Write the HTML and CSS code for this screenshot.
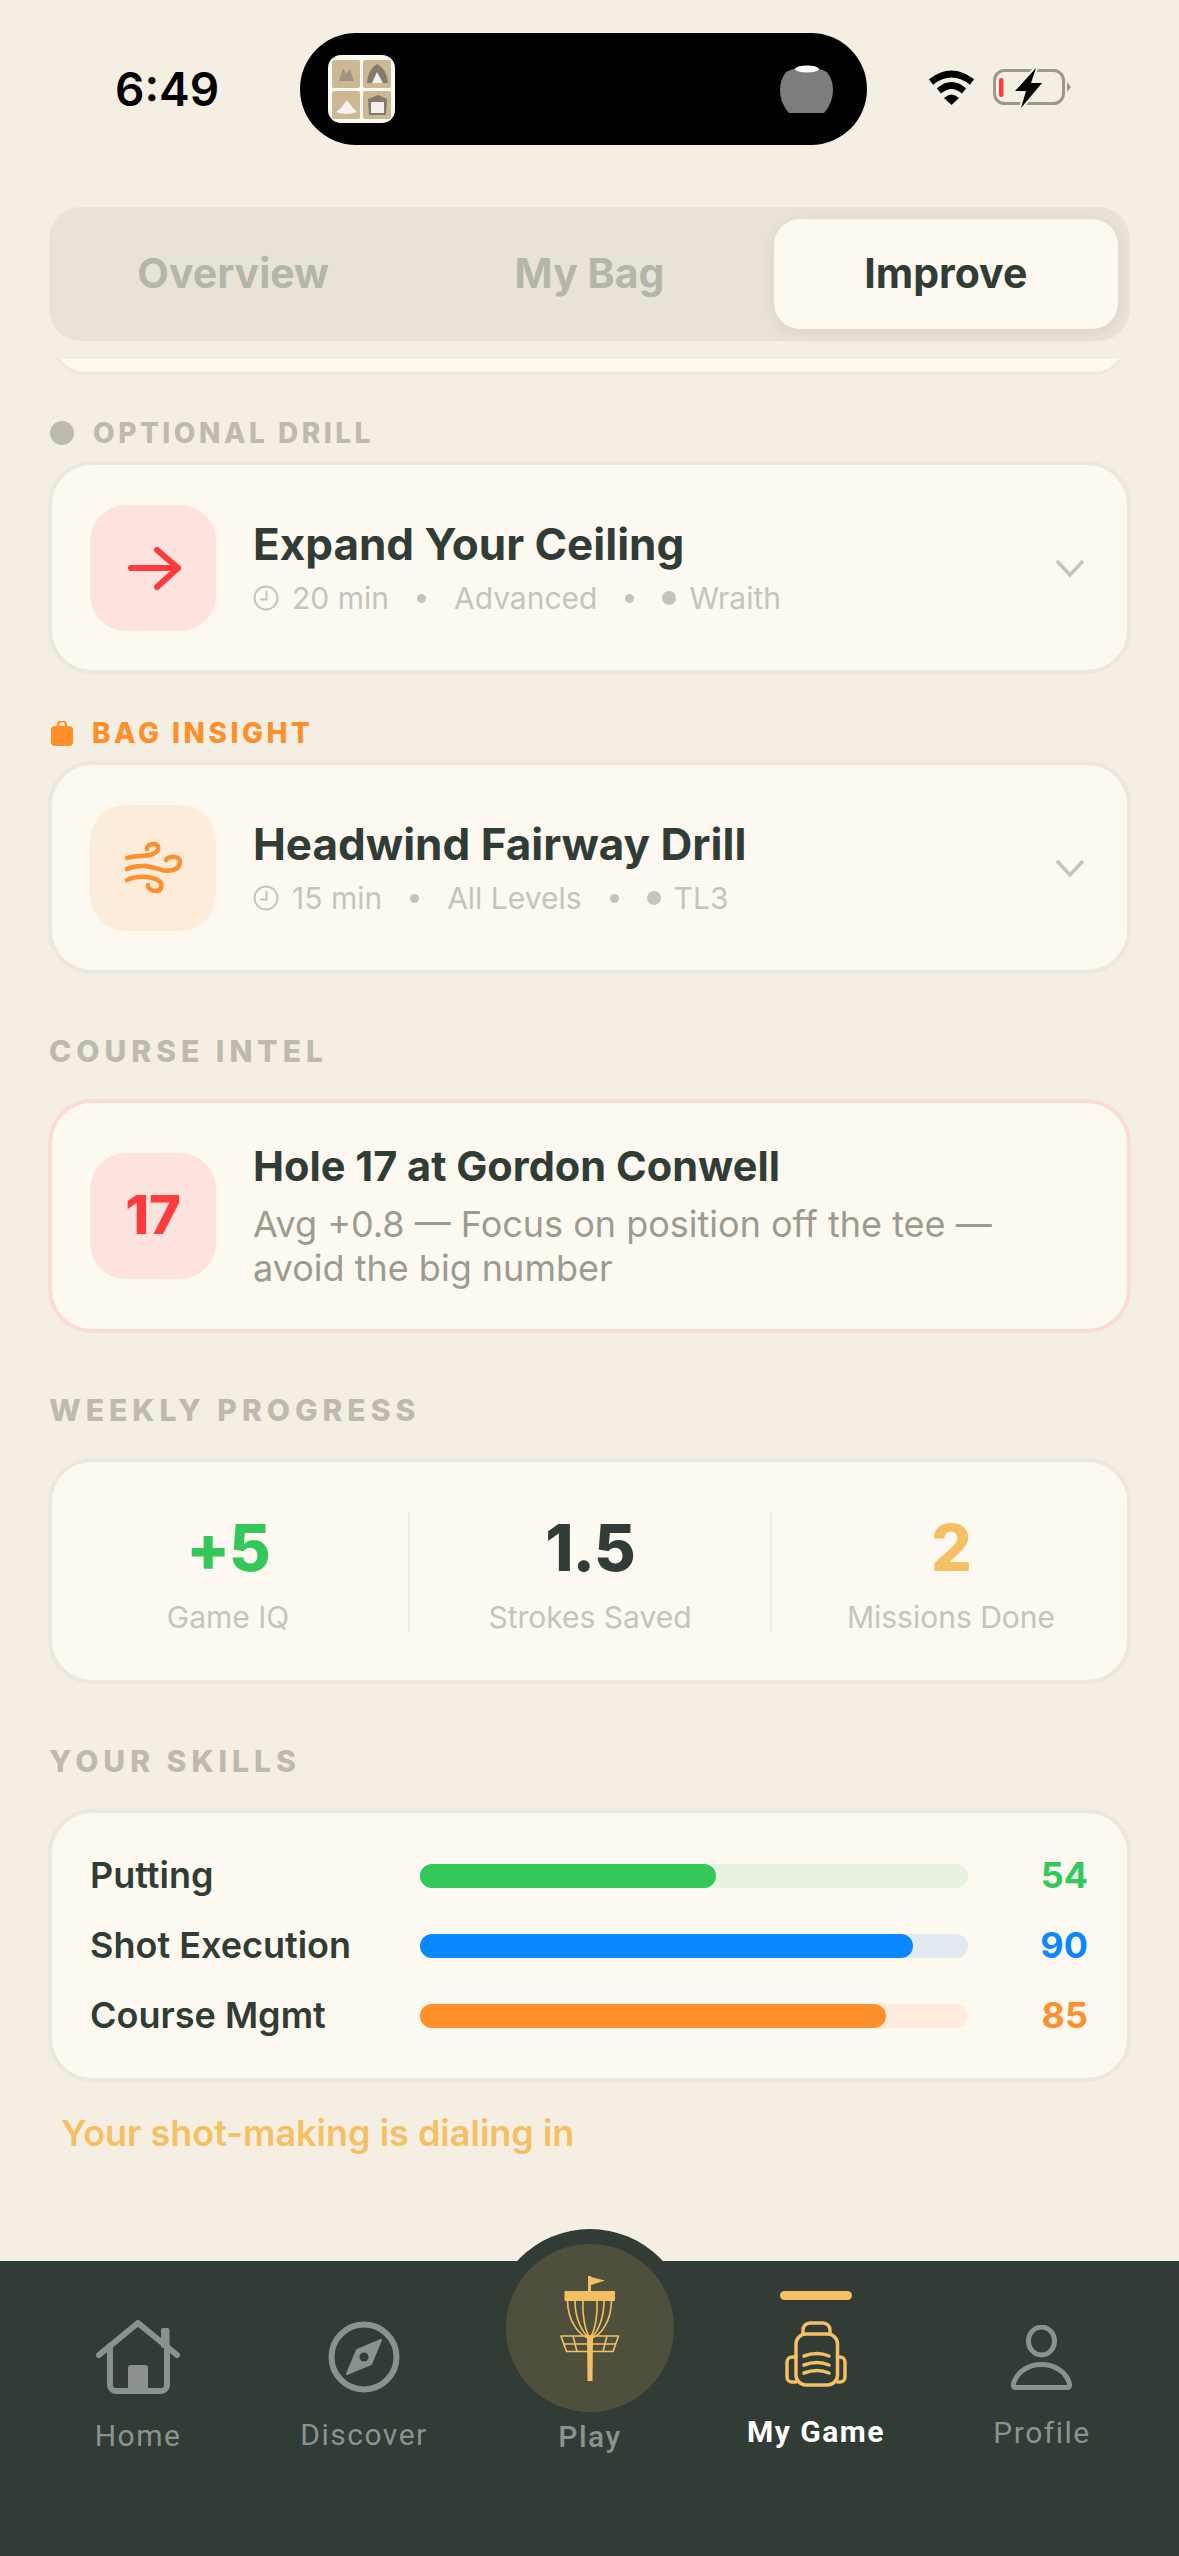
FILE: index.html
```html
<!DOCTYPE html>
<html>
<head>
<meta charset="utf-8">
<title>My Game</title>
<link rel="stylesheet" href="styles.css">
</head>
<body>
<div class="page">

	<div class="status">
		<span class="time">6:49</span>
		<div class="island">
			<svg class="app-icon" viewBox="0 0 67 68">
				<rect width="67" height="68" rx="13" fill="#fbf9f4"/>
				<rect x="4" y="5" width="28" height="28" rx="2" fill="#cdb894"/>
				<rect x="35" y="5" width="28" height="28" rx="2" fill="#cdb894"/>
				<rect x="4" y="36" width="28" height="28" rx="2" fill="#cdb894"/>
				<rect x="35" y="36" width="28" height="28" rx="2" fill="#cdb894"/>
				<path d="M11 26 L15 13 L18 19 L22 14 L26 26 Z" fill="#8f8674" opacity=".7"/>
				<path d="M39 28 Q40 14 49 9 Q59 14 60 28 Z" fill="#6f6a5f" opacity=".8"/>
				<path d="M44 28 L49 17 L55 28 Z" fill="#f3f1ea"/>
				<path d="M8 57 Q18 61 29 57 L25 53 L19 45 L13 53 Z" fill="#f6f4ee"/>
				<path d="M40 44 L50 40 L59 44 L58 60 L41 60 Z" fill="#6f6a5f" opacity=".8"/>
				<rect x="43" y="47" width="13" height="11" fill="#f3f1ea"/>
			</svg>
			<svg class="pod" viewBox="0 0 53 48">
				<path d="M6 7 Q26 -3 47 7 Q53 15 53 25 Q53 38 44 48 H9 Q0 38 0 25 Q0 15 6 7 Z" fill="#7d7d7d"/>
				<ellipse cx="27" cy="4" rx="12" ry="3.5" fill="#fff"/>
			</svg>
		</div>
		<svg class="wifi" viewBox="0 0 47 35">
			<path d="M3 12 Q23.5 -4 44 12" fill="none" stroke="#000" stroke-width="7"/>
			<path d="M11 21 Q23.5 10 36 21" fill="none" stroke="#000" stroke-width="6.5"/>
			<path d="M16 28 Q23.5 21 31 28 L23.5 35 Z" fill="#000"/>
		</svg>
		<svg class="battery" viewBox="0 0 80 40">
			<rect x="1.5" y="2.5" width="69" height="33" rx="10" fill="none" stroke="#9b9890" stroke-width="3"/>
			<path d="M74 14 L78 19 L74 24 Z" fill="#9b9890"/>
			<rect x="6" y="10" width="4.5" height="19" rx="2" fill="#ff3b3b"/>
			<path d="M43 0 L22 23 H33 L28 40 L49 15 H38 Z" fill="#000" stroke="#f5eee3" stroke-width="4" paint-order="stroke"/>
		</svg>
	</div>

	<div class="main">
		<div class="tabs">
			<div class="tab">Overview</div>
			<div class="tab">My Bag</div>
			<div class="tab tab-on">Improve</div>
		</div>

		<div class="stub"><div class="stub-card"></div></div>

		<div class="label label-first"><span class="dot"></span>OPTIONAL DRILL</div>
		<div class="card drill">
			<div class="tile tile-red">
				<svg class="tile-svg" viewBox="0 0 126 126">
					<path d="M41 63 H88 M67 45 L88 63 L67 82" fill="none" stroke="#ff3b3b" stroke-width="6" stroke-linecap="round" stroke-linejoin="round"/>
				</svg>
			</div>
			<div class="drill-text">
				<div class="title">Expand Your Ceiling</div>
				<div class="meta">
					<span class="meta-item">
						<svg class="clock" viewBox="0 0 26 26"><circle cx="13" cy="13" r="11.5" fill="none" stroke="#c6c4ba" stroke-width="2"/><path d="M13.5 6 V14.5 H7" fill="none" stroke="#c6c4ba" stroke-width="2"/></svg>
						20 min
					</span>
					<span class="sep"></span>
					<span>Advanced</span>
					<span class="sep"></span>
					<span class="meta-item"><span class="disc"></span>Wraith</span>
				</div>
			</div>
			<svg class="chevron" viewBox="0 0 30 18"><path d="M2 2 L15 16 L28 2" fill="none" stroke="#c6c4ba" stroke-width="3.5"/></svg>
		</div>

		<div class="label label-orange label-first2">
			<svg class="bag-mini" viewBox="0 0 22 25"><path d="M7 6 V4 a4 4 0 0 1 8 0 V6" fill="none" stroke="#ff8f2b" stroke-width="2.5"/><rect y="5" width="22" height="20" rx="4" fill="#ff8f2b"/></svg>
			BAG INSIGHT
		</div>
		<div class="card drill">
			<div class="tile tile-orange">
				<svg class="tile-svg" viewBox="0 0 126 126">
					<g fill="none" stroke="#ff8f2b" stroke-width="4.5" stroke-linecap="round">
						<path d="M37 53 C45 50 57 52 63 49 C71 45 69 39 63 39 C60 39 57 41 57 44"/>
						<path d="M37 64 C50 58 62 62 72 65 C82 67 90 64 90 57 C90 51 80 50 76 55"/>
						<path d="M37 75 C47 70 62 71 69 76 C73 79 72 86 66 86 C62 86 58 84 58 80"/>
					</g>
				</svg>
			</div>
			<div class="drill-text">
				<div class="title">Headwind Fairway Drill</div>
				<div class="meta">
					<span class="meta-item">
						<svg class="clock" viewBox="0 0 26 26"><circle cx="13" cy="13" r="11.5" fill="none" stroke="#c6c4ba" stroke-width="2"/><path d="M13.5 6 V14.5 H7" fill="none" stroke="#c6c4ba" stroke-width="2"/></svg>
						15 min
					</span>
					<span class="sep"></span>
					<span>All Levels</span>
					<span class="sep"></span>
					<span class="meta-item"><span class="disc"></span>TL3</span>
				</div>
			</div>
			<svg class="chevron" viewBox="0 0 30 18"><path d="M2 2 L15 16 L28 2" fill="none" stroke="#c6c4ba" stroke-width="3.5"/></svg>
		</div>

		<div class="label label-plain">COURSE INTEL</div>
		<div class="card intel">
			<div class="tile tile-red tile-num">17</div>
			<div class="intel-text">
				<div class="intel-title">Hole 17 at Gordon Conwell</div>
				<div class="intel-desc">Avg +0.8 — Focus on position off the tee — avoid the big number</div>
			</div>
		</div>

		<div class="label label-plain">WEEKLY PROGRESS</div>
		<div class="card stats">
			<div class="stat stat-a">
				<div class="stat-val c-green">+5</div>
				<div class="stat-name">Game IQ</div>
			</div>
			<div class="stat stat-line">
				<div class="stat-val">1.5</div>
				<div class="stat-name">Strokes Saved</div>
			</div>
			<div class="stat stat-line stat-c">
				<div class="stat-val c-amber">2</div>
				<div class="stat-name">Missions Done</div>
			</div>
		</div>

		<div class="label label-plain">YOUR SKILLS</div>
		<div class="card skills">
			<div class="skill">
				<span class="skill-name">Putting</span>
				<div class="track track-green"><div class="fill fill-green" style="width:54%"></div></div>
				<span class="skill-val c-green">54</span>
			</div>
			<div class="skill">
				<span class="skill-name">Shot Execution</span>
				<div class="track track-blue"><div class="fill fill-blue" style="width:90%"></div></div>
				<span class="skill-val c-blue">90</span>
			</div>
			<div class="skill">
				<span class="skill-name">Course Mgmt</span>
				<div class="track track-orange"><div class="fill fill-orange" style="width:85%"></div></div>
				<span class="skill-val c-orange">85</span>
			</div>
		</div>
		<div class="caption">Your shot-making is dialing in</div>
	</div>

	<div class="nav">
		<div class="nav-item nav-home">
			<svg class="ico-home" viewBox="0 0 84 74">
				<g fill="none" stroke="#8b928e" stroke-width="6" stroke-linecap="round" stroke-linejoin="round">
					<path d="M3 35 L42 3 L81 35"/>
					<path d="M14 26 V65 a6 6 0 0 0 6 6 H65 a6 6 0 0 0 6 -6 V26"/>
				</g>
				<rect x="65" y="8" width="8.5" height="20" rx="2" fill="#8b928e"/>
				<rect x="32" y="45" width="20" height="27" rx="3" fill="#8b928e"/>
			</svg>
			<span class="nav-txt">Home</span>
		</div>
		<div class="nav-item nav-disc">
			<svg class="ico-compass" viewBox="0 0 72 72">
				<circle cx="36" cy="36" r="32.5" fill="none" stroke="#8b928e" stroke-width="6"/>
				<path d="M53 19 L43 43 L19 53 L29 29 Z" fill="#8b928e" stroke="#8b928e" stroke-width="2" stroke-linejoin="round"/>
				<circle cx="36" cy="36" r="4.5" fill="#303c35"/>
			</svg>
			<span class="nav-txt">Discover</span>
		</div>
		<div class="nav-item nav-play">
			<div class="play-btn">
				<svg class="ico-basket" viewBox="26 24 168 168">
					<g fill="#f5bf63">
						<rect x="108" y="56" width="3" height="16"/>
						<path d="M111 57 L125 60.5 L111 65 Z"/>
						<rect x="84.5" y="71" width="50.5" height="10" rx="1"/>
						<path d="M107 118 H113 L112.5 161 H107.5 Z"/>
					</g>
					<g fill="none" stroke="#f5bf63" stroke-width="1.6">
						<path d="M87.5 81 C88 100 98 116 110 118.5 C122 116 131 100 131.5 81"/>
						<path d="M95 81 C95 98 102 113 110 118.5 C118 113 124 98 124 81"/>
						<path d="M103 81 C102 95 105 110 110 118.5 C115 110 118 95 117 81"/>
						<path d="M81 116 H138.5 L133 131.5 H86.5 Z" stroke-linejoin="round"/>
						<path d="M83.5 124 H136 M93 116 L97 131.5 M127 116 L123 131.5"/>
					</g>
				</svg>
			</div>
			<span class="nav-txt nav-txt-play">Play</span>
		</div>
		<div class="nav-item nav-game">
			<div class="nav-bar"></div>
			<svg class="ico-pack" viewBox="0 0 62 66">
				<g fill="none" stroke="#f5bf63" stroke-width="3.5" stroke-linecap="round">
					<path d="M18 13 V9 a7 7 0 0 1 7 -7 H38 a7 7 0 0 1 7 7 V13"/>
					<rect x="11" y="13" width="41.5" height="51" rx="10"/>
					<path d="M11 36 H7 a5 5 0 0 0 -5 5 V56 a5 5 0 0 0 5 5 H11"/>
					<path d="M52.5 36 H55 a5 5 0 0 1 5 5 V56 a5 5 0 0 1 -5 5 H52.5"/>
					<path d="M19 35 Q32 30 44 35 M19 44 Q32 39 44 44 M19 52 Q32 47 44 52"/>
				</g>
			</svg>
			<span class="nav-txt nav-txt-on">My Game</span>
		</div>
		<div class="nav-item nav-prof">
			<svg class="ico-person" viewBox="0 0 64 66">
				<g fill="none" stroke="#8b928e" stroke-width="5" stroke-linejoin="round">
					<ellipse cx="31.5" cy="16" rx="13" ry="14"/>
					<path d="M5.5 62.5 C3 62.5 3 60 4 57 C8 46 19 39.5 31.5 39.5 C44 39.5 55 46 59 57 C60 60 60 62.5 57.5 62.5 Z"/>
				</g>
			</svg>
			<span class="nav-txt">Profile</span>
		</div>
	</div>

</div>
</body>
</html>
```

FILE: styles.css
```css
html, body {
	margin: 0;
	padding: 0;
	background: #f5eee3;
}
body {
	font-family: Inter, "Noto Sans", sans-serif;
	color: #303c35;
}
.page {
	width: 1179px;
	height: 2556px;
	display: flex;
	flex-direction: column;
	overflow: hidden;
}

/* status bar */
.status {
	height: 174px;
	padding-top: 33px;
	display: flex;
	align-items: flex-start;
}
.time {
	width: 300px;
	box-sizing: border-box;
	padding-left: 115px;
	font-size: 46px;
	font-weight: 600;
	line-height: 112px;
	color: #000;
}
.island {
	width: 567px;
	height: 112px;
	box-sizing: border-box;
	padding: 0 34px 0 28px;
	border-radius: 56px;
	background: #000;
	display: flex;
	align-items: center;
	justify-content: space-between;
}
.app-icon {
	width: 67px;
	height: 68px;
}
.pod {
	width: 53px;
	height: 48px;
}
.wifi {
	width: 47px;
	height: 35px;
	margin: 37px 18px 0 61px;
}
.battery {
	width: 80px;
	height: 40px;
	margin-top: 35px;
}

/* content */
.main {
	flex: 1;
	padding: 0 49px;
}
.tabs {
	height: 134px;
	box-sizing: border-box;
	padding: 12px;
	display: flex;
	gap: 12px;
	background: #e9e3d7;
	border-radius: 32px;
}
.tab {
	flex: 1;
	display: flex;
	align-items: center;
	justify-content: center;
	padding-bottom: 2px;
	font-size: 41px;
	font-weight: 700;
	color: #b4b6a8;
}
.tab-on {
	background: #fdf8f0;
	border-radius: 26px;
	color: #303c35;
	box-shadow: 0 4px 14px rgba(60, 50, 30, .08);
}
.stub {
	height: 16px;
	margin-top: 18px;
	margin-bottom: -1px;
	padding: 0 3px;
	overflow: hidden;
	display: flex;
	align-items: flex-end;
}
.stub-card {
	flex: 1;
	height: 60px;
	flex-shrink: 0;
	background: #fdf8f0;
	border: 3px solid #ede8de;
	border-radius: 40px;
}

.label {
	height: 26px;
	line-height: 26px;
	font-size: 28px;
	font-weight: 800;
	letter-spacing: 3.5px;
	color: #bdbbad;
	display: flex;
	align-items: center;
}
.label-first {
	margin: 46px 0 16px;
}
.label-first2 {
	margin: 47px 0 16px;
}
.label-plain {
	margin: 65px 0 36px;
	font-size: 30px;
	letter-spacing: 5px;
}
.label-orange {
	color: #ff8f2b;
}
.dot {
	width: 24px;
	height: 24px;
	border-radius: 50%;
	background: #bdbbad;
	margin: 0 19px 0 1px;
}
.bag-mini {
	width: 22px;
	height: 25px;
	margin: 0 19px 0 2px;
}

.card {
	margin: -1px;
	background: #fdf8f0;
	border: 4px solid #ede8de;
	border-radius: 44px;
	box-sizing: border-box;
}
.drill {
	height: 213px;
	padding: 0 42px 0 38px;
	display: flex;
	align-items: center;
}
.tile {
	width: 126px;
	height: 126px;
	flex-shrink: 0;
	border-radius: 36px;
}
.tile-svg {
	display: block;
	width: 126px;
	height: 126px;
}
.tile-red {
	background: #fde2dd;
}
.tile-orange {
	background: #fdecda;
}
.drill-text {
	flex: 1;
	margin-left: 37px;
}
.title {
	font-size: 44px;
	font-weight: 700;
	line-height: 50px;
}
.meta {
	margin-top: 11px;
	height: 36px;
	display: flex;
	align-items: center;
	gap: 28px;
	font-size: 30px;
	line-height: 36px;
	color: #c6c4ba;
}
.meta-item {
	display: flex;
	align-items: center;
	gap: 13px;
}
.clock {
	width: 26px;
	height: 26px;
}
.sep {
	width: 9px;
	height: 9px;
	border-radius: 50%;
	background: #c6c4ba;
}
.disc {
	width: 14px;
	height: 14px;
	border-radius: 50%;
	background: #c6c4ba;
}
.chevron {
	width: 30px;
	height: 18px;
}

.intel {
	height: 234px;
	padding: 0 38px;
	display: flex;
	align-items: center;
	border-color: #fbdcd5;
}
.tile-num {
	box-sizing: border-box;
	padding-bottom: 4px;
	display: flex;
	align-items: center;
	justify-content: center;
	font-size: 54px;
	font-weight: 800;
	color: #ff3b3b;
}
.intel-text {
	flex: 1;
	margin-left: 37px;
	padding-right: 40px;
}
.intel-title {
	font-size: 41.5px;
	font-weight: 700;
	line-height: 48px;
}
.intel-desc {
	margin-top: 12px;
	font-size: 36px;
	line-height: 44px;
	color: #9b9c90;
}

.stats {
	height: 226px;
	padding-top: 50px;
	display: grid;
	grid-template-columns: 356px 362px 1fr;
}
.stat {
	height: 120px;
	text-align: center;
}
.stat-a {
	padding-right: 4px;
}
.stat-c {
	padding-left: 3px;
}
.stat-line {
	border-left: 2px solid #f0ece2;
}
.stat-val {
	font-size: 64px;
	font-weight: 800;
	letter-spacing: -1px;
	line-height: 72px;
}
.stat-name {
	margin-top: 17px;
	font-size: 30px;
	line-height: 32px;
	color: #c6c4ba;
}
.c-green {
	color: #34c85a;
}
.c-amber {
	color: #f5bf63;
}
.c-blue {
	color: #0a88ff;
}
.c-orange {
	color: #ff8f2b;
}

.skills {
	height: 273px;
	padding: 43px 39px 0 38px;
	display: flex;
	flex-direction: column;
	gap: 30px;
}
.skill {
	height: 40px;
	display: flex;
	align-items: center;
}
.skill-name {
	width: 330px;
	padding-bottom: 2px;
	font-size: 36px;
	font-weight: 600;
}
.track {
	flex: 1;
	height: 24px;
	border-radius: 12px;
}
.fill {
	height: 24px;
	border-radius: 12px;
}
.track-green {
	background: #e7f2e0;
}
.track-blue {
	background: #e3e9f0;
}
.track-orange {
	background: #fdecdc;
}
.fill-green {
	background: #34c85a;
}
.fill-blue {
	background: #0a88ff;
}
.fill-orange {
	background: #ff8f2b;
}
.skill-val {
	width: 120px;
	padding-bottom: 2px;
	text-align: right;
	font-size: 36px;
	font-weight: 700;
}
.caption {
	margin-top: 30px;
	padding-left: 12px;
	font-size: 36px;
	font-weight: 600;
	line-height: 44px;
	color: #f5bf63;
}

/* bottom nav */
.nav {
	height: 295px;
	padding: 0 24px 0 25px;
	flex-shrink: 0;
	background: #303c35;
	display: grid;
	grid-template-columns: repeat(5, 1fr);
}
.nav-item {
	display: flex;
	flex-direction: column;
	align-items: center;
}
.nav-txt {
	margin-top: 24px;
	font-family: Roboto, sans-serif;
	font-size: 30px;
	line-height: 36px;
	letter-spacing: 1.5px;
	color: #8b928e;
}
.nav-home {
	padding-top: 59px;
}
.nav-disc {
	padding-top: 60px;
}
.nav-game {
	padding-top: 30px;
}
.nav-prof {
	padding-top: 64px;
}
.ico-home {
	width: 84px;
	height: 74px;
}
.ico-compass {
	width: 72px;
	height: 72px;
}
.ico-pack {
	width: 62px;
	height: 66px;
	margin-top: 21px;
}
.ico-person {
	width: 64px;
	height: 66px;
}
.play-btn {
	width: 168px;
	height: 168px;
	margin-top: -17px;
	border-radius: 50%;
	background: #4e503c;
	box-shadow: 0 0 0 15px #303c35;
	flex-shrink: 0;
}
.ico-basket {
	display: block;
	width: 168px;
	height: 168px;
}
.nav-txt-play {
	margin-top: 7px;
	font-weight: 500;
}
.nav-bar {
	width: 72px;
	height: 9px;
	border-radius: 5px;
	background: #f5bf63;
}
.nav-txt-on {
	margin-top: 27px;
	font-weight: 700;
	color: #fff;
}
```
